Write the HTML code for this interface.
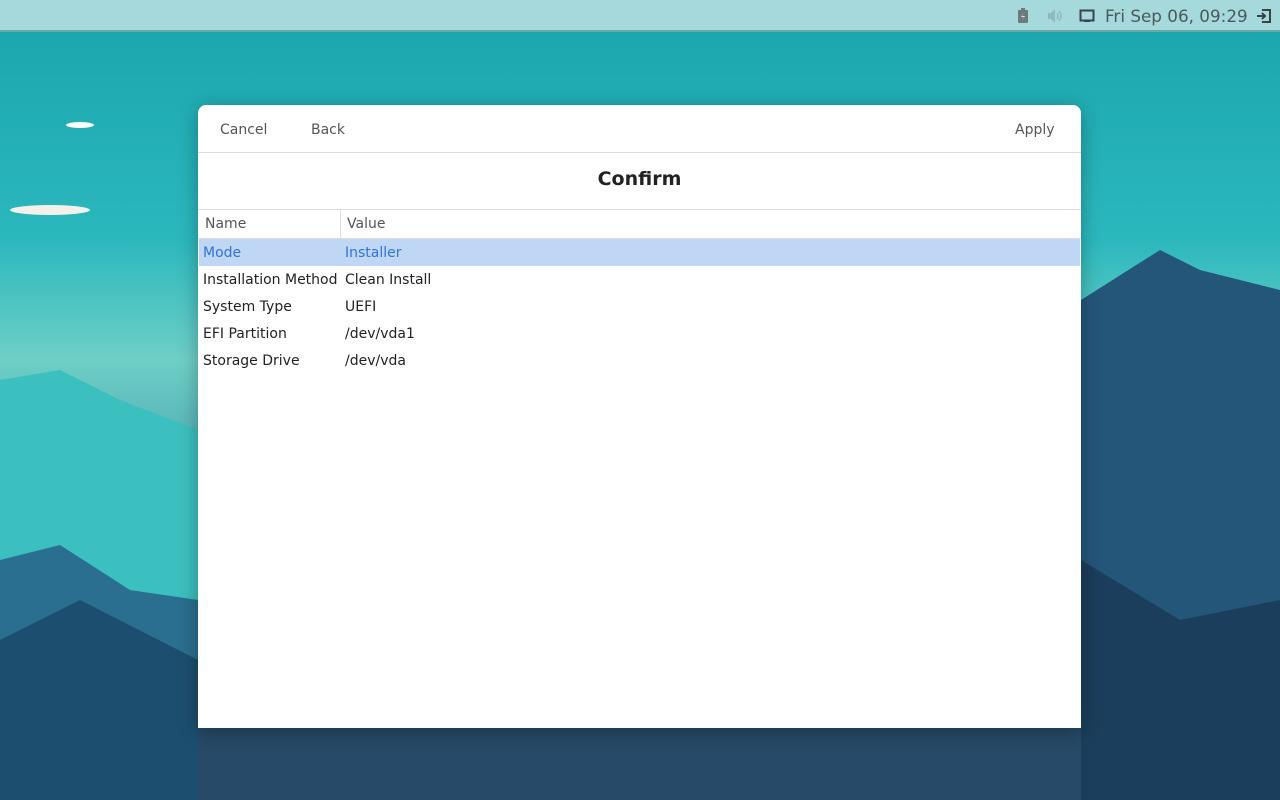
<!DOCTYPE html>
<html><head><meta charset="utf-8"><style>
*{margin:0;padding:0;box-sizing:border-box}
body{width:1280px;height:800px;overflow:hidden;position:relative;font-family:"DejaVu Sans","Liberation Sans",sans-serif;background:linear-gradient(180deg,#1aa4ad 0%,#2bb8bd 30%,#6ecfc6 45%,#3f97a8 65%,#1e5578 100%)}
#bar{position:absolute;left:0;top:0;width:1280px;height:32px;background:#a6d9dc;border-bottom:2px solid #6aa8ac}
#clock{position:absolute;left:1105px;top:6px;font-size:16.8px;color:#4a5a5c}
#dlg{position:absolute;left:198px;top:105px;width:883px;height:623px;background:#fff;border-radius:8px 8px 0 0;box-shadow:0 4px 20px rgba(0,0,0,.3);overflow:hidden}
.btn{position:absolute;top:17px;font-size:14px;color:#555}
#hdr{position:absolute;left:0;top:47px;width:100%;border-top:1px solid #ddd}
#title{position:absolute;top:63px;width:100%;text-align:center;font-size:19px;font-weight:bold;color:#222}
#th{position:absolute;top:104px;left:0;width:100%;height:30px;border-top:1px solid #ddd;border-bottom:1px solid #ddd;font-size:14px;color:#555}
#th span{position:absolute;top:6px}
#th i{position:absolute;left:142px;top:0;height:28px;border-left:1px solid #ddd}
.r{position:absolute;left:1px;width:881px;height:27px;font-size:14px;color:#222}
.r span{position:absolute;top:6px}
.sel{background:#bfd7f5;color:#2f74d8}
</style></head><body>
<svg width="1280" height="800" style="position:absolute;left:0;top:0">
<polygon points="0,380 60,370 120,400 198,430 198,800 0,800" fill="#3cc0bf"/>
<polygon points="0,560 60,545 130,590 198,600 198,800 0,800" fill="#2a6f8f"/>
<polygon points="0,640 80,600 198,660 198,800 0,800" fill="#1c4f6f"/>
<polygon points="1081,300 1160,250 1200,270 1280,290 1280,800 1081,800" fill="#24567a"/>
<polygon points="1081,560 1180,620 1280,600 1280,800 1081,800" fill="#1b3e5c"/>
<polygon points="198,728 1081,728 1081,800 198,800" fill="#264a68"/>
<ellipse cx="80" cy="125" rx="14" ry="3" fill="#fff"/>
<ellipse cx="50" cy="210" rx="40" ry="5" fill="#f4f0ea"/>
</svg>
<div id="bar">
<svg style="position:absolute;left:1016px;top:8px" width="14" height="16"><rect x="2" y="2" width="10" height="13" rx="1" fill="#6b7a7b"/><rect x="5" y="0" width="4" height="2" fill="#6b7a7b"/><path d="M8 4 5 9h3l-2 4 3-5H6z" fill="#ddd"/></svg>
<svg style="position:absolute;left:1046px;top:8px" width="18" height="16"><path d="M2 5h3l4-4v14l-4-4H2z" fill="#8fb9bb"/><path d="M11 5q2 3 0 6M13 3q4 5 0 10" stroke="#8fb9bb" fill="none" stroke-width="1.5"/></svg>
<svg style="position:absolute;left:1079px;top:8px" width="16" height="16"><rect x="1.5" y="2.5" width="13" height="10" fill="none" stroke="#3a4446" stroke-width="2"/><rect x="5" y="12" width="6" height="2" fill="#3a4446"/></svg>
<div id="clock">Fri Sep 06, 09:29</div>
<svg style="position:absolute;left:1256px;top:8px" width="16" height="16"><path d="M6 2h8v12H6" fill="none" stroke="#3a4446" stroke-width="2"/><path d="M1 8h8M6 5l3 3-3 3" fill="none" stroke="#3a4446" stroke-width="2"/></svg>
</div>
<div id="dlg">
<div class="btn" style="left:22px">Cancel</div>
<div class="btn" style="left:113px">Back</div>
<div class="btn" style="left:817px">Apply</div>
<div id="hdr"></div>
<div id="title">Confirm</div>
<div id="th"><span style="left:7px">Name</span><i></i><span style="left:149px">Value</span></div>
<div class="r sel" style="top:134px"><span style="left:4px">Mode</span><span style="left:146px">Installer</span></div>
<div class="r" style="top:161px"><span style="left:4px">Installation Method</span><span style="left:146px">Clean Install</span></div>
<div class="r" style="top:188px"><span style="left:4px">System Type</span><span style="left:146px">UEFI</span></div>
<div class="r" style="top:215px"><span style="left:4px">EFI Partition</span><span style="left:146px">/dev/vda1</span></div>
<div class="r" style="top:242px"><span style="left:4px">Storage Drive</span><span style="left:146px">/dev/vda</span></div>
</div>
</body></html>
